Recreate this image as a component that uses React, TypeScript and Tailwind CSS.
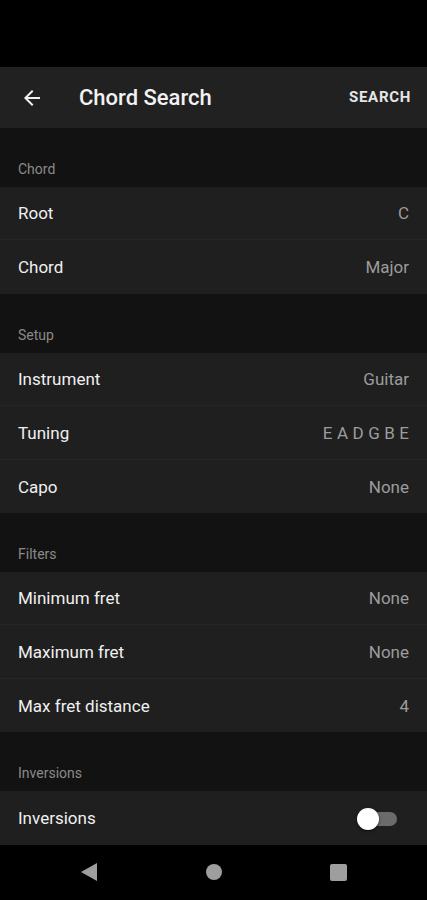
const sections = [
    {
        title: 'Chord',
        rows: [
            {label: 'Root', value: 'C'},
            {label: 'Chord', value: 'Major'},
        ],
    },
    {
        title: 'Setup',
        rows: [
            {label: 'Instrument', value: 'Guitar'},
            {label: 'Tuning', value: 'EADGBE', wide: true},
            {label: 'Capo', value: 'None'},
        ],
    },
    {
        title: 'Filters',
        rows: [
            {label: 'Minimum fret', value: 'None'},
            {label: 'Maximum fret', value: 'None'},
            {label: 'Max fret distance', value: '4'},
        ],
    },
]

function Row({label, value, wide, last}: {label: string, value: string, wide?: boolean, last?: boolean}) {
    return (
        <div className={"flex justify-between items-center h-[53.4px] pt-[2px] px-[18px] bg-[#1f1f1f] " + (last ? "" : "border-b border-[#262626]")}>
            <span className="text-[17px] text-[#f0f0f0]">{label}</span>
            <span className={"text-[17px] text-[#9c9c9c] " + (wide ? "tracking-[4.5px] mr-[-4.5px]" : "")}>{value}</span>
        </div>
    )
}

function Header({title}: {title: string}) {
    return (
        <div className="h-[59px] flex items-end pb-[7px] px-[18px] bg-[#121212]">
            <span className="text-[14px] text-[#8a8a8a]">{title}</span>
        </div>
    )
}

export default function App() {
    return (
        <div className="w-[427px] h-[900px] flex flex-col bg-[#121212] font-['Roboto',sans-serif] overflow-hidden">
            <div className="h-[67px] shrink-0 bg-black"/>
            <div className="h-[61px] shrink-0 flex items-center bg-[#212121] px-[20px]">
                <svg width="24" height="24" viewBox="0 0 24 24" className="shrink-0">
                    <path d="M20 11H7.83l5.59-5.59L12 4l-8 8 8 8 1.41-1.41L7.83 13H20v-2z" fill="#f2f2f2"/>
                </svg>
                <span className="ml-[35px] text-[22px] font-medium text-[#f2f2f2]">Chord Search</span>
                <span className="ml-auto mr-[-4px] text-[15px] font-bold tracking-[0.7px] text-[#e6e6e6]">SEARCH</span>
            </div>

            {sections.map(s => (
                <div key={s.title} className="shrink-0">
                    <Header title={s.title}/>
                    {s.rows.map((r, i) => (
                        <Row key={r.label} label={r.label} value={r.value} wide={r.wide} last={i === s.rows.length - 1}/>
                    ))}
                </div>
            ))}

            <Header title="Inversions"/>
            <div className="flex justify-between items-center h-[53.4px] pt-[2px] px-[18px] bg-[#1f1f1f] shrink-0">
                <span className="text-[17px] text-[#f0f0f0]">Inversions</span>
                <div className="relative w-[38px] h-[14px] mr-[12px]">
                    <div className="absolute inset-0 rounded-full bg-[#6b6b6b]"/>
                    <div className="absolute left-[-2px] top-[-4px] w-[22px] h-[22px] rounded-full bg-white shadow-[0_1px_3px_rgba(0,0,0,0.6)]"/>
                </div>
            </div>

            <div className="flex-1 bg-black flex items-center justify-center gap-[85px]">
                <div className="w-[40px] flex justify-center">
                    <svg width="18" height="20" viewBox="0 0 18 20">
                        <path d="M17 1v18L1 10z" fill="#9e9e9e"/>
                    </svg>
                </div>
                <div className="w-[40px] flex justify-center">
                    <div className="w-[16px] h-[16px] rounded-full bg-[#9e9e9e]"/>
                </div>
                <div className="w-[40px] flex justify-center">
                    <div className="w-[17px] h-[17px] rounded-[2px] bg-[#9e9e9e]"/>
                </div>
            </div>
        </div>
    )
}
